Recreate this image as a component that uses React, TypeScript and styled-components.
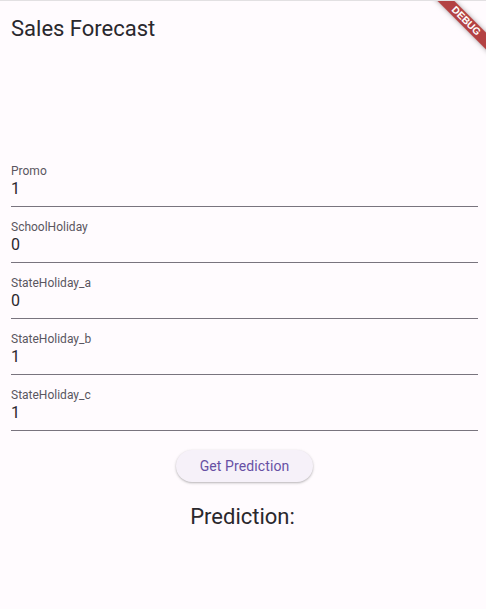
import React from "react";
import styled, { createGlobalStyle } from "styled-components";

const GlobalStyle = createGlobalStyle`
  html, body {
    margin: 0;
    padding: 0;
    background: #fffbfe;
  }
  * { box-sizing: border-box; }
  body {
    font-family: Roboto, "Noto Sans", "Liberation Sans", sans-serif;
    color: #1c1b1f;
  }
`;

const Page = styled.div`
  position: relative;
  min-height: 609px;
  overflow: hidden;
  background: #fffbfe;
  border-top: 1px solid #e2e0e2;
`;

const AppBar = styled.header`
  height: 55px;
  display: flex;
  align-items: center;
  padding-left: 11px;
`;

const Title = styled.h1`
  margin: 0;
  font-size: 22px;
  font-weight: 400;
  line-height: 28px;
  color: #2a282d;
`;

const Body = styled.main`
  padding: 95px 8px 0 11px;
  display: flex;
  flex-direction: column;
`;

const Field = styled.label`
  display: flex;
  flex-direction: column;
  padding: 13px 0 7px;
  border-bottom: 1px solid #79747e;
`;

const FieldLabel = styled.span`
  font-size: 12px;
  line-height: 14px;
  color: #5a5660;
`;

const FieldValue = styled.span`
  margin-top: 1px;
  font-size: 16px;
  line-height: 20px;
  color: #2a282d;
`;

const ButtonRow = styled.div`
  display: flex;
  justify-content: center;
  margin-top: 19px;
`;

const Button = styled.button`
  height: 32px;
  padding: 0 24px;
  border: none;
  border-radius: 16px;
  background: #f6f1f9;
  color: #6750a4;
  font-family: Roboto, "Noto Sans", sans-serif;
  font-size: 14px;
  font-weight: 400;
  letter-spacing: 0.1px;
  box-shadow: 0 1px 2px rgba(0, 0, 0, 0.22), 0 1px 3px 1px rgba(0, 0, 0, 0.06);
  cursor: pointer;
`;

const Result = styled.p`
  margin: 19px 0 0;
  padding-right: 4px;
  text-align: center;
  font-size: 22px;
  line-height: 32px;
  color: #2a282d;
`;

const Banner = styled.div`
  position: absolute;
  top: 14px;
  right: -20px;
  width: 80px;
  height: 12px;
  transform: rotate(45deg);
  background: rgba(160, 20, 20, 0.8);
  box-shadow: 0 0 5px rgba(0, 0, 0, 0.35);
  display: flex;
  align-items: center;
  justify-content: center;
  color: #fff;
  font-family: "Liberation Sans", Arial, sans-serif;
  font-size: 10px;
  font-weight: 700;
  line-height: 1;
`;

const fields = [
  { label: "Promo", value: "1" },
  { label: "SchoolHoliday", value: "0" },
  { label: "StateHoliday_a", value: "0" },
  { label: "StateHoliday_b", value: "1" },
  { label: "StateHoliday_c", value: "1" },
];

export default function App() {
  return (
    <Page>
      <GlobalStyle />
      <AppBar>
        <Title>Sales Forecast</Title>
      </AppBar>
      <Body>
        {fields.map((f) => (
          <Field key={f.label}>
            <FieldLabel>{f.label}</FieldLabel>
            <FieldValue>{f.value}</FieldValue>
          </Field>
        ))}
        <ButtonRow>
          <Button>Get Prediction</Button>
        </ButtonRow>
        <Result>Prediction:</Result>
      </Body>
      <Banner>DEBUG</Banner>
    </Page>
  );
}
